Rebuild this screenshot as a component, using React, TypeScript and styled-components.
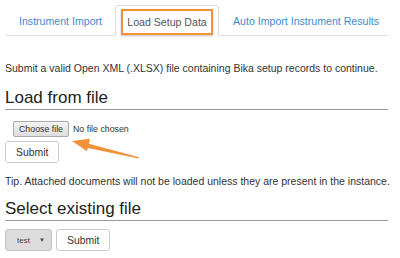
import React from 'react'
import styled, { createGlobalStyle } from 'styled-components'

const GlobalStyle = createGlobalStyle`
  html, body {
    margin: 0;
    padding: 0;
    background: #fff;
  }
  body {
    font-family: "Liberation Sans", Arial, sans-serif;
    color: #333;
  }
`

const Page = styled.div`
  width: 400px;
  height: 258px;
  padding: 5px 12px 0 5px;
  box-sizing: border-box;
  overflow: hidden;
`

const TabBar = styled.div`
  display: flex;
  height: 31px;
`

const Tab = styled.div<{ $active?: boolean; $w: number }>`
  display: flex;
  align-items: center;
  box-sizing: border-box;
  white-space: nowrap;
  padding: 0 ${(p) => (p.$active ? '5px' : '13px')};
  font-size: 10.6px;
  color: ${(p) => (p.$active ? '#555' : '#428bca')};
  border: 1px solid ${(p) => (p.$active ? '#ddd' : 'transparent')};
  border-bottom: 1px solid ${(p) => (p.$active ? 'transparent' : '#ddd')};
  border-radius: 3px 3px 0 0;
  width: ${(p) => p.$w}px;
`

const Highlight = styled.span`
  display: flex;
  align-items: center;
  justify-content: center;
  height: 26px;
  margin-top: 2px;
  width: 100%;
  box-sizing: border-box;
  border: 2px solid #f0923a;
  box-shadow: 0 1px 2px rgba(0, 0, 0, 0.25);
`

const Text = styled.p<{ $top: number }>`
  margin: ${(p) => p.$top}px 0 0;
  font-size: 10.5px;
  line-height: 14px;
  white-space: nowrap;
`

const Section = styled.div<{ $top: number }>`
  position: relative;
  margin-top: ${(p) => p.$top}px;
`

const Heading = styled.h2`
  margin: 0;
  font-weight: normal;
  font-size: 17px;
  line-height: 20px;
  color: #222;
  border-bottom: 1px solid #999;
  padding-bottom: 1px;
`

const FileRow = styled.div`
  display: flex;
  align-items: center;
  gap: 4px;
  margin-top: 11px;
  padding-left: 8px;
  font-size: 8.8px;
  color: #333;
`

const ChooseButton = styled.span`
  display: inline-block;
  padding: 2px 5px;
  line-height: 10px;
  font-size: 8.8px;
  background: linear-gradient(#f4f4f4, #dedede);
  border: 1px solid #aaa;
  border-radius: 2px;
`

const Row = styled.div<{ $top: number }>`
  display: flex;
  align-items: center;
  gap: 4px;
  margin-top: ${(p) => p.$top}px;
`

const Button = styled.span`
  display: inline-flex;
  align-items: center;
  justify-content: center;
  box-sizing: border-box;
  height: 22px;
  padding: 0 10px;
  font-size: 10.4px;
  background: #fff;
  border: 1px solid #ccc;
  border-radius: 3px;
  color: #333;
`

const SelectBox = styled.span`
  display: inline-flex;
  align-items: center;
  justify-content: space-between;
  box-sizing: border-box;
  width: 47px;
  height: 22px;
  padding: 0 6px 0 11px;
  font-size: 8px;
  color: #444;
  background: #dcdcdc;
  border: 1px solid #c4c4c4;
  border-radius: 3px;
`

const Caret = styled.span`
  font-size: 6px;
`

const Arrow = styled.svg`
  position: absolute;
  left: 61px;
  top: 45px;
`

export default function App() {
  return (
    <>
      <GlobalStyle />
      <Page>
        <TabBar>
          <Tab $w={110}>Instrument Import</Tab>
          <Tab $active $w={104}>
            <Highlight>Load Setup Data</Highlight>
          </Tab>
          <Tab $w={169}>Auto Import Instrument Results</Tab>
        </TabBar>

        <Text $top={25}>
          Submit a valid Open XML (.XLSX) file containing Bika setup records to continue.
        </Text>

        <Section $top={13}>
          <Heading>Load from file</Heading>
          <FileRow>
            <ChooseButton>Choose file</ChooseButton>
            <span>No file chosen</span>
          </FileRow>
          <Row $top={4}>
            <Button>Submit</Button>
          </Row>
          <Arrow width="80" height="30" viewBox="0 0 80 30">
            <polygon points="20,10 73,24.2 72.6,25.4 19.3,14.5" fill="#f0923a" />
            <polygon points="6,8 24,5.8 21,18.2" fill="#f0923a" />
          </Arrow>
        </Section>

        <Text $top={11}>
          Tip. Attached documents will not be loaded unless they are present in the instance.
        </Text>

        <Section $top={11}>
          <Heading>Select existing file</Heading>
          <Row $top={8}>
            <SelectBox>
              <span>test</span>
              <Caret>▼</Caret>
            </SelectBox>
            <Button>Submit</Button>
          </Row>
        </Section>
      </Page>
    </>
  )
}
